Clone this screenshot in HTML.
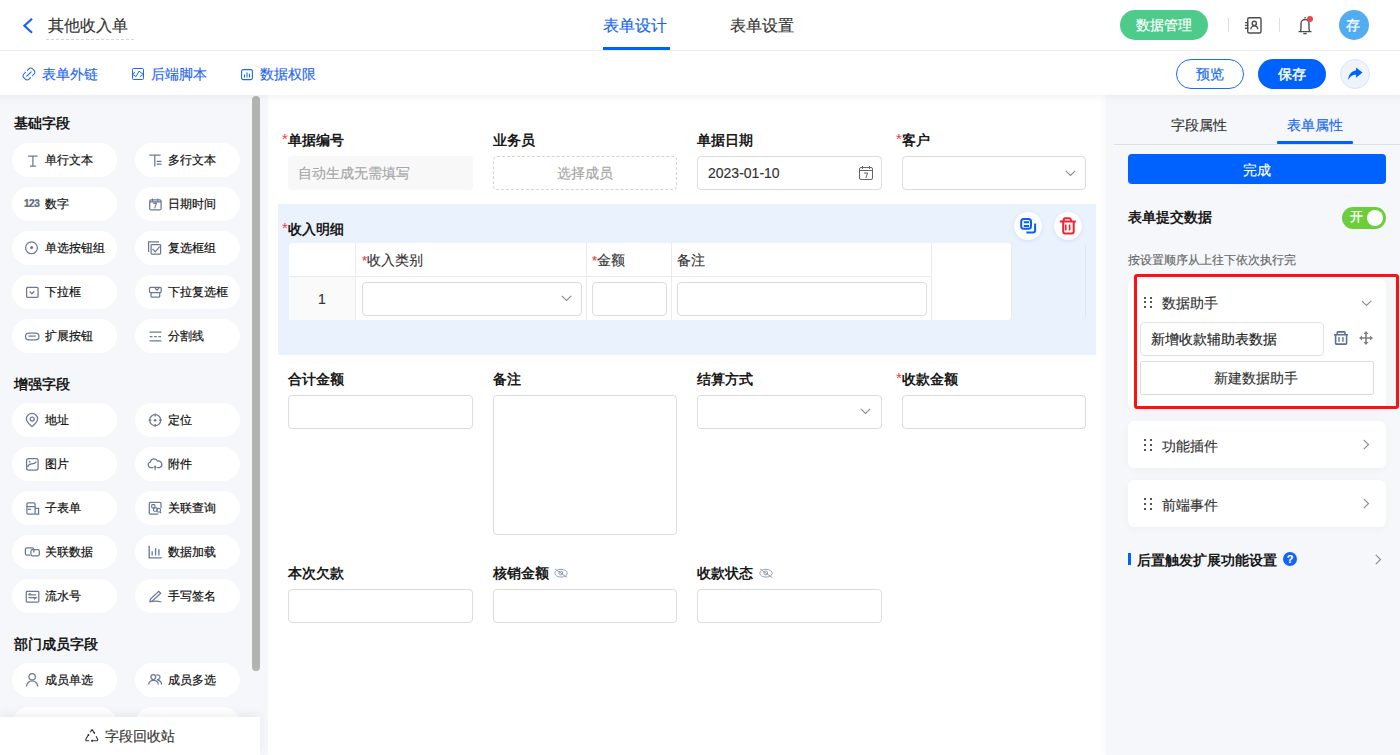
<!DOCTYPE html>
<html><head><meta charset="utf-8">
<style>
*{box-sizing:border-box;margin:0;padding:0}
html,body{width:1400px;height:755px;overflow:hidden;background:#fff;font-family:"Liberation Sans",sans-serif;color:#1f2329}
.a{position:absolute}
.t{position:absolute;white-space:nowrap;line-height:20px;-webkit-text-stroke-width:0.15px}
.lbl,.sec{-webkit-text-stroke-width:0}
svg{position:absolute;overflow:visible}
.hdr{left:0;top:0;width:1400px;height:51px;border-bottom:1px solid #ececec;background:#fff}
.tb{left:0;top:51px;width:1400px;height:44px;background:#fff}
.lp{left:0;top:95px;width:268px;height:660px;background:#f5f7fb;overflow:hidden}
.cv{left:268px;top:95px;width:838px;height:660px;background:#fff}
.rp{left:1106px;top:95px;width:294px;height:660px;background:#f5f7fb;box-shadow:-2px 0 6px rgba(0,0,0,0.03)}
.sec{font-size:14px;font-weight:bold;color:#1a1a1a}
.pill{position:absolute;width:105px;height:34px;border-radius:17px;background:#fff}
.pill .t{left:33px;top:7px;font-size:12px;color:#111;-webkit-text-stroke:0.2px #111}
.pill svg{left:12px;top:10px}
.lbl{font-size:14px;font-weight:bold;color:#1a1a1a}
.req{color:#f03c3c;font-weight:normal;font-size:15px;position:relative;top:-1px}
.inp{position:absolute;height:34px;border:1px solid #dcdcdc;border-radius:4px;background:#fff}
</style></head><body>
<!-- header -->
<div class="a hdr"></div>
<svg style="left:22px;top:18px" width="12" height="16" viewBox="0 0 12 16"><path d="M10 0.8L2.4 7.8L10 14.8" fill="none" stroke="#1464f6" stroke-width="2.2"/></svg>
<div class="t" style="left:48px;top:15px;font-size:16px;line-height:22px;color:#333">其他收入单</div>
<div class="a" style="left:46px;top:39px;width:88px;border-top:1px dashed #d6d6d6"></div>
<div class="t" style="left:603px;top:15px;font-size:16px;line-height:22px;color:#1464f6">表单设计</div>
<div class="a" style="left:603px;top:47px;width:67px;height:3px;background:#0062fe"></div>
<div class="t" style="left:730px;top:15px;font-size:16px;line-height:22px;color:#333">表单设置</div>
<div class="a" style="left:1120px;top:10px;width:88px;height:30px;border-radius:15px;background:#4ccb8a"></div>
<div class="t" style="left:1136px;top:15px;font-size:14px;color:#fff;-webkit-text-stroke:0.2px #fff">数据管理</div>
<div class="a" style="left:1228px;top:18px;width:1px;height:14px;background:#dedede"></div>
<div class="a" style="left:1279px;top:18px;width:1px;height:14px;background:#dedede"></div>
<div class="a" style="left:1339px;top:10px;width:30px;height:30px;border-radius:50%;background:#52adf0"></div>
<div class="t" style="left:1346px;top:15px;font-size:14px;color:#fff;-webkit-text-stroke:0.3px #fff">存</div>
<!-- toolbar -->
<div class="a tb"></div>
<div class="t" style="left:42px;top:64px;font-size:14px;color:#1f66f0">表单外链</div>
<div class="t" style="left:151px;top:64px;font-size:14px;color:#1f66f0">后端脚本</div>
<div class="t" style="left:260px;top:64px;font-size:14px;color:#1f66f0">数据权限</div>
<div class="a" style="left:1176px;top:59px;width:68px;height:30px;border:1px solid #1a6cf5;border-radius:15px"></div>
<div class="t" style="left:1196px;top:64px;font-size:14px;color:#1a6cf5;-webkit-text-stroke:0.2px #1a6cf5">预览</div>
<div class="a" style="left:1258px;top:59px;width:68px;height:30px;border-radius:15px;background:#0062fe"></div>
<div class="t" style="left:1278px;top:64px;font-size:14px;color:#fff;-webkit-text-stroke:0.45px #fff">保存</div>
<div class="a" style="left:1340px;top:59px;width:30px;height:30px;border-radius:50%;background:#eef3fe;border:1px solid #dbe5fa"></div>


<svg style="left:1243px;top:16px" width="20" height="19" viewBox="0 0 20 19" fill="none" stroke="#4d4d4d" stroke-width="1.4"><rect x="4.7" y="1.8" width="13.3" height="15.2" rx="1.5"/><path d="M1.9 6.6h3.5M1.9 9.4h3.5M1.9 12.3h3.5"/><circle cx="11.3" cy="7.4" r="2.1"/><path d="M7.9 13.3a3.4 3.4 0 0 1 6.8 0"/></svg>
<svg style="left:1297px;top:16px" width="17" height="19" viewBox="0 0 17 19" fill="none" stroke="#4d4d4d" stroke-width="1.4"><path d="M8 1v1.3"/><path d="M1.5 15.6h13M3.2 15.6c0.6-1 0.8-2 0.8-4V7.5a4 4 0 0 1 8 0v4.1c0 2 0.2 3 0.8 4"/><path d="M6.3 17.6h3.4"/></svg>
<div class="a" style="left:1306.9px;top:15.8px;width:6.3px;height:6.3px;border-radius:50%;background:#e5484d"></div>
<svg style="left:22px;top:67px" width="14" height="14" viewBox="0 0 14 14" fill="none" stroke="#1f66f0" stroke-width="1.05" stroke-linecap="round"><path d="M5.3 3.4l1.6-1.6a2.6 2.6 0 0 1 3.7 0l1.5 1.5a2.6 2.6 0 0 1 0 3.7l-1.6 1.6"/><path d="M8.6 10.6l-1.6 1.6a2.6 2.6 0 0 1-3.7 0l-1.5-1.5a2.6 2.6 0 0 1 0-3.7l1.6-1.6"/><path d="M4.8 9.2l4.4-4.4"/></svg>
<svg style="left:132px;top:68px" width="12" height="12" viewBox="0 0 12 12" fill="none" stroke="#1f66f0" stroke-width="1"><rect x="0.5" y="0.5" width="11" height="11" rx="1"/><path d="M3.2 4L0.5 6.3 4 8.6 7 3.2 11.3 6.3 7.9 8.7"/></svg>
<svg style="left:241px;top:69px" width="12" height="11" viewBox="0 0 12 11" fill="none" stroke="#1f66f0" stroke-width="1.1"><rect x="0.6" y="0.6" width="10.8" height="10" rx="1.5"/><path d="M3.5 5.5v3M6 3.5v5M8.5 4.8v3.7"/></svg>
<svg style="left:1348px;top:67px" width="15" height="14" viewBox="0 0 15 14" fill="#0062fe"><path d="M8 0.5L14.5 5.5 8 10.7V7.8C4.5 7.6 2 9.5 0.2 13 0.4 7.8 3.5 4 8 3.6z"/></svg>
<!-- left panel -->
<div class="a lp">
<div class="t sec" style="left:14px;top:18px">基础字段</div>
<div class="pill" style="left:12px;top:48px"><svg style="left:11px;top:8.5px" width="17" height="17" viewBox="0 0 17 17" fill="none" stroke="#6b7896" stroke-width="1.25"><path d="M5.1 4H14.6M9.9 4V14M7 14H12.9"/></svg><div class="t">单行文本</div></div>
<div class="pill" style="left:135px;top:48px"><svg style="left:11px;top:8.5px" width="17" height="17" viewBox="0 0 17 17" fill="none" stroke="#6b7896" stroke-width="1.25"><path d="M3.4 3.2H14.6M8.8 3.2V14.5M10.7 9.4H15.6M10.7 12.1H15.6"/></svg><div class="t">多行文本</div></div>
<div class="pill" style="left:12px;top:92px"><div class="t" style="left:12px;top:7px;font-size:10px;letter-spacing:-0.45px;font-weight:bold;color:#6b7896">123</div><div class="t">数字</div></div>
<div class="pill" style="left:135px;top:92px"><svg style="left:11px;top:8.5px" width="17" height="17" viewBox="0 0 17 17" fill="none" stroke="#6b7896" stroke-width="1.25"><rect x="3.7" y="3.9" width="11.4" height="10" rx="1.5"/><path d="M3.7 5.9H15.1M6.5 2.4V5.4M11.8 2.4V5.4M7.2 7.4H10.4L8.6 12.4" stroke-width="1.1"/></svg><div class="t">日期时间</div></div>
<div class="pill" style="left:12px;top:136px"><svg style="left:11px;top:8.5px" width="17" height="17" viewBox="0 0 17 17" fill="none" stroke="#6b7896" stroke-width="1.25"><circle cx="8.5" cy="7.8" r="5.9"/><circle cx="8.6" cy="7.6" r="1.5" fill="#6b7896" stroke="none"/></svg><div class="t">单选按钮组</div></div>
<div class="pill" style="left:135px;top:136px"><svg style="left:11px;top:8.5px" width="17" height="17" viewBox="0 0 17 17" fill="none" stroke="#6b7896" stroke-width="1.25"><path d="M2.6 12.1V1.9H13"/><rect x="5.1" y="4.5" width="9.5" height="9.6" rx="0.8"/><path d="M6.5 8.9L9.2 11.8L13.7 6.7"/></svg><div class="t">复选框组</div></div>
<div class="pill" style="left:12px;top:180px"><svg style="left:11px;top:8.5px" width="17" height="17" viewBox="0 0 17 17" fill="none" stroke="#6b7896" stroke-width="1.25"><rect x="3.6" y="3.4" width="11.5" height="9.9" rx="1"/><path d="M6.6 7.3L8.9 9.8L11.3 7.3"/></svg><div class="t">下拉框</div></div>
<div class="pill" style="left:135px;top:180px"><svg style="left:11px;top:8.5px" width="17" height="17" viewBox="0 0 17 17" fill="none" stroke="#6b7896" stroke-width="1.25"><rect x="3.5" y="3.3" width="11.7" height="5.3" rx="1"/><path d="M5 8.6V12.3A0.7 0.7 0 0 0 5.7 13H13A0.7 0.7 0 0 0 13.7 12.3V8.6M8.9 3.6L11 6.3L13.2 3.6"/></svg><div class="t">下拉复选框</div></div>
<div class="pill" style="left:12px;top:224px"><svg style="left:11px;top:8.5px" width="17" height="17" viewBox="0 0 17 17" fill="none" stroke="#6b7896" stroke-width="1.25"><rect x="2.5" y="5" width="13.5" height="6.8" rx="3.4"/><path d="M5.4 8.1H12.7"/></svg><div class="t">扩展按钮</div></div>
<div class="pill" style="left:135px;top:224px"><svg style="left:11px;top:8.5px" width="17" height="17" viewBox="0 0 17 17" fill="none" stroke="#6b7896" stroke-width="1.25"><path d="M3.5 4.1H15.4M3.5 12.9H15.4"/><path d="M3.8 8.6H6.5M8.1 8.6H10.8M12.4 8.6H15.1"/></svg><div class="t">分割线</div></div>
<div class="t sec" style="left:14px;top:279px">增强字段</div>
<div class="pill" style="left:12px;top:308px"><svg style="left:11px;top:8.5px" width="17" height="17" viewBox="0 0 17 17" fill="none" stroke="#6b7896" stroke-width="1.25"><path d="M9 14.5C9 14.5 3.4 9.8 3.4 6.9A5.6 5.6 0 0 1 14.6 6.9C14.6 9.8 9 14.5 9 14.5Z"/><circle cx="9.2" cy="7" r="2"/></svg><div class="t">地址</div></div>
<div class="pill" style="left:135px;top:308px"><svg style="left:11px;top:8.5px" width="17" height="17" viewBox="0 0 17 17" fill="none" stroke="#6b7896" stroke-width="1.25"><circle cx="9.2" cy="8.2" r="5.5"/><path d="M9.2 1.6V4.4M9.2 12V14.8M2.6 8.2H5.4M13 8.2H15.8"/><circle cx="9.1" cy="8.3" r="1.3" fill="#6b7896" stroke="none"/></svg><div class="t">定位</div></div>
<div class="pill" style="left:12px;top:352px"><svg style="left:11px;top:8.5px" width="17" height="17" viewBox="0 0 17 17" fill="none" stroke="#6b7896" stroke-width="1.25"><rect x="3.6" y="2.6" width="11.5" height="11.5" rx="2"/><path d="M4.5 11Q5.6 7.8 8.8 7.9Q11.8 7.9 13.4 5.6"/><circle cx="6.6" cy="5.7" r="0.9" fill="#6b7896" stroke="none"/></svg><div class="t">图片</div></div>
<div class="pill" style="left:135px;top:352px"><svg style="left:11px;top:8.5px" width="17" height="17" viewBox="0 0 17 17" fill="none" stroke="#6b7896" stroke-width="1.25"><path d="M7.2 11.7H4.9A2.9 2.9 0 0 1 4.4 6A3.6 3.6 0 0 1 11.3 5.1A3 3 0 0 1 13.4 11.7H11"/><path d="M9.1 10.2V14"/><path d="M7.1 11.6L9.1 9.3L11.1 11.6Z" fill="#6b7896" stroke="none"/></svg><div class="t">附件</div></div>
<div class="pill" style="left:12px;top:396px"><svg style="left:11px;top:8.5px" width="17" height="17" viewBox="0 0 17 17" fill="none" stroke="#6b7896" stroke-width="1.25"><rect x="3.9" y="2.8" width="8.2" height="11.3" rx="1.2"/><path d="M3.9 6.7H12.1M4.8 9.4H8M12.1 8.3H15.6V14.1H12.1"/></svg><div class="t">子表单</div></div>
<div class="pill" style="left:135px;top:396px"><svg style="left:11px;top:8.5px" width="17" height="17" viewBox="0 0 17 17" fill="none" stroke="#6b7896" stroke-width="1.25"><path d="M12.3 14H4.3A1 1 0 0 1 3.3 13V3.4A1 1 0 0 1 4.3 2.4H14A1 1 0 0 1 15 3.4V8.3"/><rect x="5.7" y="4.6" width="3.2" height="3.3" rx="0.6" stroke-width="1.1"/><rect x="7.6" y="7.9" width="3.5" height="3.3" rx="0.6" stroke-width="1.1"/><circle cx="12.7" cy="10.3" r="1.9" stroke-width="1.1"/><path d="M14 11.7L15 13.2"/></svg><div class="t">关联查询</div></div>
<div class="pill" style="left:12px;top:440px"><svg style="left:11px;top:8.5px" width="17" height="17" viewBox="0 0 17 17" fill="none" stroke="#6b7896" stroke-width="1.25"><path d="M7 11.2H3.9A1.5 1.5 0 0 1 2.4 9.7V5.4A1.5 1.5 0 0 1 3.9 3.9H9.3A1.5 1.5 0 0 1 10.8 5.4V8.6"/><rect x="7.9" y="5.7" width="8.4" height="6.2" rx="1.6"/></svg><div class="t">关联数据</div></div>
<div class="pill" style="left:135px;top:440px"><svg style="left:11px;top:8.5px" width="17" height="17" viewBox="0 0 17 17" fill="none" stroke="#6b7896" stroke-width="1.25"><path d="M3.2 1.7V13.8H15.8" stroke-width="1.35"/><path d="M6.2 7.3V11.5M9.6 4.3V11.5M12.9 5.2V11.5" stroke-width="1.35"/></svg><div class="t">数据加载</div></div>
<div class="pill" style="left:12px;top:484px"><svg style="left:11px;top:8.5px" width="17" height="17" viewBox="0 0 17 17" fill="none" stroke="#6b7896" stroke-width="1.25"><rect x="3.3" y="3.4" width="12.5" height="10.6" rx="0.8"/><path d="M5.4 6.8H12.9M5.4 6.8L7.4 5.2M5.4 9.6H12.9L10.9 11.2"/></svg><div class="t">流水号</div></div>
<div class="pill" style="left:135px;top:484px"><svg style="left:11px;top:8.5px" width="17" height="17" viewBox="0 0 17 17" fill="none" stroke="#6b7896" stroke-width="1.25"><path d="M4.3 11.3L4.1 13.3L6.1 13.1L14.7 5.3L12.7 3.4Z"/><path d="M3.4 14Q9.3 12.4 15.4 14"/></svg><div class="t">手写签名</div></div>
<div class="t sec" style="left:14px;top:539px">部门成员字段</div>
<div class="pill" style="left:12px;top:568px"><svg style="left:11px;top:8.5px" width="17" height="17" viewBox="0 0 17 17" fill="none" stroke="#6b7896" stroke-width="1.25"><circle cx="9.15" cy="4.75" r="3.2"/><path d="M3.5 14.4A5.6 5.6 0 0 1 14.7 14.4"/></svg><div class="t">成员单选</div></div>
<div class="pill" style="left:135px;top:568px"><svg style="left:11px;top:8.5px" width="17" height="17" viewBox="0 0 17 17" fill="none" stroke="#6b7896" stroke-width="1.25"><circle cx="7.3" cy="5.1" r="2.4"/><path d="M2.7 12.5A4.8 4.2 0 0 1 12.3 12.5"/><path d="M10.3 3.2A2.4 2.4 0 1 1 10.9 7.5M11.6 8.1A4.8 4.6 0 0 1 15.6 12.6"/></svg><div class="t">成员多选</div></div>
<div class="pill" style="left:12px;top:612px"><svg style="left:11px;top:8.5px" width="17" height="17" viewBox="0 0 17 17" fill="none" stroke="#6b7896" stroke-width="1.25"><circle cx="9.15" cy="4.75" r="3.2"/><path d="M3.5 14.4A5.6 5.6 0 0 1 14.7 14.4"/></svg><div class="t"></div></div>
<div class="pill" style="left:135px;top:612px"><svg style="left:11px;top:8.5px" width="17" height="17" viewBox="0 0 17 17" fill="none" stroke="#6b7896" stroke-width="1.25"><circle cx="7.3" cy="5.1" r="2.4"/><path d="M2.7 12.5A4.8 4.2 0 0 1 12.3 12.5"/><path d="M10.3 3.2A2.4 2.4 0 1 1 10.9 7.5M11.6 8.1A4.8 4.6 0 0 1 15.6 12.6"/></svg><div class="t"></div></div>
<div class="a" style="left:252px;top:1px;width:8px;height:575px;border-radius:4px;background:#b3b3b3"></div>
<div class="a" style="left:0;top:622px;width:260px;height:38px;background:#fff;box-shadow:0 -3px 10px rgba(0,0,0,0.06)"></div>
<div class="t" style="left:105px;top:631px;font-size:14px;color:#333">字段回收站</div>
<svg style="left:85px;top:634px" width="14" height="13" viewBox="0 0 14 13" fill="none" stroke="#333" stroke-width="1.1"><path d="M5.3 3.2L6.8 0.9h0.6l1.9 3.2M8.6 3.3l0.8 0.8 0.3-1.1"/><path d="M3.6 5.5L0.7 10.5l0.3 1.3h3.2M3.8 7l-0.2-1.5-1.1 0.4"/><path d="M6.5 11.8h5.7l0.6-1.2-1.8-3.3M7.6 10.8l-1.1 1 1.1 0.9"/></svg>
</div>
<!-- canvas -->
<div class="a cv">
</div>
<div class="t lbl" style="left:282px;top:130px"><span class="req">*</span>单据编号</div>
<div class="t lbl" style="left:493px;top:130px">业务员</div>
<div class="t lbl" style="left:697px;top:130px">单据日期</div>
<div class="t lbl" style="left:896px;top:130px"><span class="req">*</span>客户</div>
<div class="a" style="left:288px;top:156px;width:185px;height:34px;border-radius:4px;background:#f8f8f9"></div>
<div class="t" style="left:298px;top:163px;font-size:14px;color:#a6a6a6">自动生成无需填写</div>
<div class="a" style="left:493px;top:156px;width:184px;height:34px;border-radius:4px;border:1px dashed #d4d4d4"></div>
<div class="t" style="left:557px;top:163px;font-size:14px;color:#a6a6a6">选择成员</div>
<div class="inp" style="left:697px;top:156px;width:185px;height:34px;"></div>
<div class="t" style="left:708px;top:163px;font-size:14px;color:#333">2023-01-10</div>
<svg style="left:859px;top:166px" width="14" height="14" viewBox="0 0 14 14" fill="none" stroke="#666" stroke-width="1"><rect x="0.5" y="1.5" width="13" height="12" rx="1.5"/><path d="M0.5 4.5h13M3.5 0v3M10.5 0v3M5 7h3.6l-1.8 5"/></svg>
<div class="inp" style="left:902px;top:156px;width:184px;height:34px;"></div>
<svg style="left:1065px;top:170px" width="11" height="7" viewBox="0 0 11 7"><path d="M0.8 0.8l4.7 4.7 4.7-4.7" fill="none" stroke="#8a8f99" stroke-width="1.2"/></svg>
<div class="a" style="left:278px;top:204px;width:818px;height:151px;background:#eaf2fe"></div>
<div class="t lbl" style="left:282px;top:219px"><span class="req">*</span>收入明细</div>
<div class="a" style="left:1011px;top:243px;width:75px;height:77px;border-right:1px solid #e0e5ee;border-radius:0 4px 4px 0"></div>
<div class="a" style="left:289px;top:243px;width:722px;height:77px;background:#fff;border-radius:3px;box-shadow:1px 0 0 #ebebeb"></div>
<div class="a" style="left:289px;top:277px;width:66px;height:43px;background:#fafafa"></div>
<div class="a" style="left:289px;top:276px;width:642px;height:1px;background:#ebebeb"></div>
<div class="a" style="left:355px;top:243px;width:1px;height:77px;background:#ebebeb"></div>
<div class="a" style="left:586px;top:243px;width:1px;height:77px;background:#ebebeb"></div>
<div class="a" style="left:671px;top:243px;width:1px;height:77px;background:#ebebeb"></div>
<div class="a" style="left:931px;top:243px;width:1px;height:77px;background:#ebebeb"></div>
<div class="t" style="left:362px;top:250px;font-size:14px;color:#333"><span style="color:#f03c3c;font-size:13px">*</span>收入类别</div>
<div class="t" style="left:592px;top:250px;font-size:14px;color:#333"><span style="color:#f03c3c;font-size:13px">*</span>金额</div>
<div class="t" style="left:677px;top:250px;font-size:14px;color:#333">备注</div>
<div class="t" style="left:318px;top:289px;font-size:14px;color:#333">1</div>
<div class="inp" style="left:362px;top:282px;width:220px;height:34px;"></div>
<svg style="left:561px;top:295px" width="11" height="7" viewBox="0 0 11 7"><path d="M0.8 0.8l4.7 4.7 4.7-4.7" fill="none" stroke="#8a8f99" stroke-width="1.2"/></svg>
<div class="inp" style="left:592px;top:282px;width:75px;height:34px;"></div>
<div class="inp" style="left:677px;top:282px;width:250px;height:34px;"></div>
<div class="a" style="left:1014px;top:212px;width:28px;height:28px;border-radius:50%;background:#fff;box-shadow:0 1px 4px rgba(60,90,160,0.12)"></div>
<div class="a" style="left:1054px;top:212px;width:28px;height:28px;border-radius:50%;background:#fff;box-shadow:0 1px 4px rgba(60,90,160,0.12)"></div>
<svg style="left:1019px;top:217px" width="18" height="18" viewBox="0 0 18 18" fill="none" stroke="#0b5ff7" stroke-width="2"><rect x="2.2" y="2" width="9.8" height="9.8" rx="2.5"/><path d="M4.8 5.3h5.2M4.8 8.9h5.2"/><path d="M16.1 6.4v7.2a2 2 0 0 1-2 2H7.4"/></svg>
<svg style="left:1059px;top:217px" width="18" height="18" viewBox="0 0 18 18" fill="none" stroke="#f5222d" stroke-width="2"><path d="M0.8 4.6h16M4.7 4.6V3a1.8 1.8 0 0 1 1.8-1.8h3.6A1.8 1.8 0 0 1 11.9 3v1.6M4.2 4.6v10a2 2 0 0 0 2 2h6.5a2 2 0 0 0 2-2v-10"/><path d="M6.8 7.4v6.2M10.6 7.4v6.2" stroke-width="1.6"/></svg>
<div class="t lbl" style="left:288px;top:369px">合计金额</div>
<div class="t lbl" style="left:493px;top:369px">备注</div>
<div class="t lbl" style="left:697px;top:369px">结算方式</div>
<div class="t lbl" style="left:896px;top:369px"><span class="req">*</span>收款金额</div>
<div class="inp" style="left:288px;top:395px;width:185px;height:34px;"></div>
<div class="inp" style="left:493px;top:395px;width:184px;height:140px;"></div>
<div class="inp" style="left:697px;top:395px;width:185px;height:34px;"></div>
<svg style="left:860px;top:408px" width="11" height="7" viewBox="0 0 11 7"><path d="M0.8 0.8l4.7 4.7 4.7-4.7" fill="none" stroke="#8a8f99" stroke-width="1.2"/></svg>
<div class="inp" style="left:902px;top:395px;width:184px;height:34px;"></div>
<div class="t lbl" style="left:288px;top:563px">本次欠款</div>
<div class="t lbl" style="left:493px;top:563px">核销金额</div>
<div class="t lbl" style="left:697px;top:563px">收款状态</div>
<svg style="left:553.5px;top:567.5px" width="14" height="11" viewBox="0 0 14 11" fill="none" stroke="#8d9ab5" stroke-width="0.95"><ellipse cx="7" cy="5.2" rx="6.2" ry="3.9"/><circle cx="6.8" cy="5" r="1.9"/><path d="M0.9 0.9L13.1 9.5"/></svg>
<svg style="left:758.5px;top:567.5px" width="14" height="11" viewBox="0 0 14 11" fill="none" stroke="#8d9ab5" stroke-width="0.95"><ellipse cx="7" cy="5.2" rx="6.2" ry="3.9"/><circle cx="6.8" cy="5" r="1.9"/><path d="M0.9 0.9L13.1 9.5"/></svg>
<div class="inp" style="left:288px;top:589px;width:185px;height:34px;"></div>
<div class="inp" style="left:493px;top:589px;width:184px;height:34px;"></div>
<div class="inp" style="left:697px;top:589px;width:185px;height:34px;"></div>
<!-- right panel -->
<div class="a rp">
</div>
<div class="t" style="left:1171px;top:114.5px;font-size:14px;color:#333">字段属性</div>
<div class="t" style="left:1287px;top:114.5px;font-size:14px;color:#1464f6">表单属性</div>
<div class="a" style="left:1114px;top:144px;width:286px;height:1px;background:#dcdfe6"></div>
<div class="a" style="left:1277px;top:141px;width:76px;height:3px;background:#0062fe;border-radius:1px"></div>
<div class="a" style="left:1128px;top:154px;width:258px;height:30px;border-radius:4px;background:#0062fe"></div>
<div class="t" style="left:1243px;top:160px;font-size:14px;color:#fff">完成</div>
<div class="t lbl" style="left:1128px;top:207px">表单提交数据</div>
<div class="a" style="left:1342px;top:207px;width:44px;height:22px;border-radius:11px;background:#6dce3d"></div>
<div class="a" style="left:1367px;top:210px;width:16px;height:16px;border-radius:50%;background:#fff"></div>
<div class="t" style="left:1350px;top:206.5px;font-size:12.5px;color:#fff;-webkit-text-stroke:0.3px #fff">开</div>
<div class="t" style="left:1128px;top:250px;font-size:12px;color:#666">按设置顺序从上往下依次执行完</div>
<div class="a" style="left:1128px;top:279px;width:258px;height:130px;border-radius:6px;background:#fff;box-shadow:0 2px 8px rgba(0,0,0,0.03)"></div>
<div class="a" style="left:1144px;top:296.5px;width:2.2px;height:2.2px;background:#555"></div><div class="a" style="left:1144px;top:301.3px;width:2.2px;height:2.2px;background:#555"></div><div class="a" style="left:1144px;top:306.1px;width:2.2px;height:2.2px;background:#555"></div><div class="a" style="left:1150px;top:296.5px;width:2.2px;height:2.2px;background:#555"></div><div class="a" style="left:1150px;top:301.3px;width:2.2px;height:2.2px;background:#555"></div><div class="a" style="left:1150px;top:306.1px;width:2.2px;height:2.2px;background:#555"></div>
<div class="t" style="left:1162px;top:293px;font-size:14px;color:#333">数据助手</div>
<svg style="left:1361px;top:300px" width="11" height="7" viewBox="0 0 11 7"><path d="M0.8 0.8l4.7 4.7 4.7-4.7" fill="none" stroke="#8a8f99" stroke-width="1.2"/></svg>
<div class="inp" style="left:1140px;top:322px;width:184px;height:34px;border-color:#e2e2e2"></div>
<div class="t" style="left:1151px;top:329px;font-size:14px;color:#222">新增收款辅助表数据</div>
<svg style="left:1334px;top:331px" width="14" height="14" viewBox="0 0 14 14" fill="none" stroke="#5d6f93" stroke-width="1.6"><path d="M0 3.8h14M3.3 3.8V1.5a0.6 0.6 0 0 1 .6-.6h6.4a0.6 0.6 0 0 1 .6.6v2.3M1.6 3.8v8.5a0.8 0.8 0 0 0 .8.8h9.4a0.8 0.8 0 0 0 .8-.8V3.8"/><path d="M5 6v4.8M8.9 6v4.8" stroke-width="1.4"/></svg>
<svg style="left:1359px;top:331px" width="14" height="14" viewBox="0 0 14 14" fill="#808080"><path d="M7 0L9.6 3H4.4zM7 14L9.6 11H4.4zM0 7L3 4.4V9.6zM14 7L11 4.4V9.6z"/><path d="M7 2.5v9M2.5 7h9" stroke="#808080" stroke-width="1.6"/></svg>
<div class="a" style="left:1140px;top:361px;width:234px;height:34px;border:1px solid #dcdcdc;border-radius:2px;background:#fff"></div>
<div class="t" style="left:1214px;top:368px;font-size:14px;color:#333">新建数据助手</div>
<div class="a" style="left:1134px;top:274px;width:265px;height:135px;border:3px solid #f11;border-radius:3px"></div>
<div class="a" style="left:1128px;top:421px;width:258px;height:47px;border-radius:6px;background:#fff;box-shadow:0 2px 8px rgba(0,0,0,0.03)"></div>
<div class="a" style="left:1144px;top:438.9px;width:2.2px;height:2.2px;background:#555"></div><div class="a" style="left:1144px;top:443.7px;width:2.2px;height:2.2px;background:#555"></div><div class="a" style="left:1144px;top:448.5px;width:2.2px;height:2.2px;background:#555"></div><div class="a" style="left:1150px;top:438.9px;width:2.2px;height:2.2px;background:#555"></div><div class="a" style="left:1150px;top:443.7px;width:2.2px;height:2.2px;background:#555"></div><div class="a" style="left:1150px;top:448.5px;width:2.2px;height:2.2px;background:#555"></div>
<div class="t" style="left:1162px;top:436px;font-size:14px;color:#333">功能插件</div>
<svg style="left:1363px;top:439px" width="7" height="11" viewBox="0 0 7 11"><path d="M0.8 0.8l4.7 4.7-4.7 4.7" fill="none" stroke="#8a8f99" stroke-width="1.2"/></svg>
<div class="a" style="left:1128px;top:480px;width:258px;height:47px;border-radius:6px;background:#fff;box-shadow:0 2px 8px rgba(0,0,0,0.03)"></div>
<div class="a" style="left:1144px;top:497.9px;width:2.2px;height:2.2px;background:#555"></div><div class="a" style="left:1144px;top:502.7px;width:2.2px;height:2.2px;background:#555"></div><div class="a" style="left:1144px;top:507.5px;width:2.2px;height:2.2px;background:#555"></div><div class="a" style="left:1150px;top:497.9px;width:2.2px;height:2.2px;background:#555"></div><div class="a" style="left:1150px;top:502.7px;width:2.2px;height:2.2px;background:#555"></div><div class="a" style="left:1150px;top:507.5px;width:2.2px;height:2.2px;background:#555"></div>
<div class="t" style="left:1162px;top:495px;font-size:14px;color:#333">前端事件</div>
<svg style="left:1363px;top:498px" width="7" height="11" viewBox="0 0 7 11"><path d="M0.8 0.8l4.7 4.7-4.7 4.7" fill="none" stroke="#8a8f99" stroke-width="1.2"/></svg>
<div class="a" style="left:1128px;top:553px;width:3px;height:12px;background:#0062fe"></div>
<div class="t lbl" style="left:1137px;top:550px">后置触发扩展功能设置</div>
<div class="a" style="left:1283px;top:552px;width:14px;height:14px;border-radius:50%;background:#1464f6"></div>
<div class="t" style="left:1283px;top:549px;width:14px;text-align:center;font-size:11px;font-weight:bold;color:#fff">?</div>
<svg style="left:1375px;top:554px" width="7" height="11" viewBox="0 0 7 11"><path d="M0.8 0.8l4.7 4.7-4.7 4.7" fill="none" stroke="#8a8f99" stroke-width="1.2"/></svg>
<div class="a" style="left:0;top:95px;width:1400px;height:10px;background:linear-gradient(rgba(0,0,0,0.035),rgba(0,0,0,0.012) 50%,rgba(0,0,0,0))"></div>
</body></html>
